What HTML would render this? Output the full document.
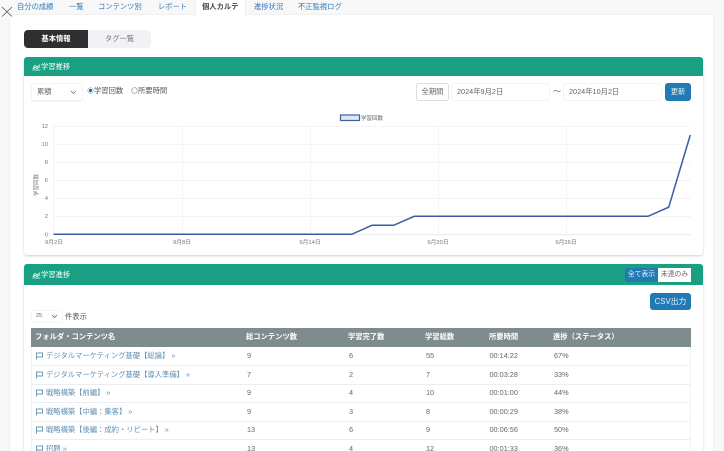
<!DOCTYPE html>
<html lang="ja"><head><meta charset="utf-8"><style>
*{box-sizing:border-box}
html,body{margin:0;padding:0;width:724px;height:451px;overflow:hidden}
body{background:#f8f8f8;font-family:"Liberation Sans","Noto Sans CJK JP",sans-serif;color:#555;font-size:7.3px}
#w{position:absolute;left:0;top:0;width:724px;height:451px;overflow:hidden;filter:blur(.25px)}
.a{position:absolute;white-space:nowrap}
.tab{position:absolute;top:0;height:15px;line-height:13px;color:#337ab7;font-size:7.3px;white-space:nowrap}
.panel{position:absolute;left:10px;top:15px;width:703px;height:436px;background:#fff;box-shadow:0 0 2px #e4e4e4}
.card{position:absolute;left:24px;width:679px;background:#fff;box-shadow:0 1px 2px #ccc;border-radius:3px}
.head{position:absolute;left:0;top:0;width:100%;background:#19a082;border-radius:3px 3px 0 0;color:#fff;font-size:7.3px}
.input{position:absolute;background:#fff;border:1px solid #f4f4f4;border-radius:3px;height:18px;line-height:16px;color:#666;font-size:7.3px;white-space:nowrap;padding-left:5px}
.btn{position:absolute;background:#217ab5;color:#e8f2f8;border-radius:3px;text-align:center;white-space:nowrap;font-size:7.3px}
.row{position:absolute;left:31px;width:660px;height:19px;border-bottom:1px solid #eee;border-left:1px solid #f2f2f2;border-right:1px solid #f2f2f2;font-size:7.3px;color:#666;line-height:18px}
.row span{position:absolute;top:0;white-space:nowrap}
.row .n{left:14px;color:#5f8fb2;font-size:7.3px}
.row svg{position:absolute;left:3px;top:5px}
.th{position:absolute;top:328px;line-height:18px;color:#fff;font-weight:bold;font-size:7.3px;white-space:nowrap}
svg text{font-family:"Liberation Sans","Noto Sans CJK JP",sans-serif}
</style></head><body><div id="w">
<div class="panel"></div>
<div class="a" style="left:195px;top:0;width:51px;height:16px;background:#fff;border:1px solid #eee;border-top:0;border-bottom:0"></div>
<div class="tab" style="left:17px">自分の成績</div>
<div class="tab" style="left:69px">一覧</div>
<div class="tab" style="left:98px">コンテンツ別</div>
<div class="tab" style="left:158px">レポート</div>
<div class="tab" style="left:202px;color:#444;font-weight:bold">個人カルテ</div>
<div class="tab" style="left:254px">進捗状況</div>
<div class="tab" style="left:298px">不正監視ログ</div>
<svg class="a" style="left:0;top:5px" width="14" height="13"><path d="M2 2L12 11.500M12 2L2 11.500" stroke="#555" stroke-width="0.800" fill="none"/></svg>

<div class="a" style="left:24px;top:30px;width:64px;height:18px;background:#2f2f2f;border-radius:4px 0 0 4px;color:#fff;font-weight:bold;text-align:center;line-height:18px">基本情報</div>
<div class="a" style="left:88px;top:30px;width:63px;height:18px;background:#f1f2f5;border-radius:0 4px 4px 0;color:#777;text-align:center;line-height:18px">タグ一覧</div>

<div class="card" style="top:57px;height:198px">
<div class="head" style="height:19px;line-height:19px;padding-left:17px">学習推移</div>
<svg class="a" style="left:8px;top:6px" width="9" height="8"><path d="M0.500 7H8.500M1 5L3 2.500L5 4L8 1.500M1 6L3 4.500L5 5.500L8 3.500" stroke="#fff" stroke-width="0.800" fill="none"/></svg>
</div>
<div class="input" style="left:31px;top:83px;width:52px;box-shadow:0 1px 1px #f0f0f0">累積</div>
<svg class="a" style="left:70px;top:90px" width="7" height="5"><path d="M1 1L3.500 3.500L6 1" stroke="#666" stroke-width="0.700" fill="none"/></svg>
<svg class="a" style="left:87px;top:87px" width="7" height="7"><circle cx="3.500" cy="3.500" r="2.800" fill="#fff" stroke="#9bb"  stroke-width="0.600"/><circle cx="3.500" cy="3.500" r="1.700" fill="#1f6fd0"/></svg>
<div class="a" style="left:94px;top:86px;color:#555">学習回数</div>
<svg class="a" style="left:131px;top:87px" width="7" height="7"><circle cx="3.500" cy="3.500" r="2.800" fill="#fff" stroke="#888" stroke-width="0.600"/></svg>
<div class="a" style="left:138px;top:86px;color:#555">所要時間</div>
<div class="input" style="left:416px;top:83px;width:33px;border-color:#ddd;padding:0;text-align:center;color:#666">全期間</div>
<div class="input" style="left:451px;top:83px;width:99px">2024年9月2日</div>
<div class="a" style="left:553px;top:86px;color:#666;font-size:8px">～</div>
<div class="input" style="left:563px;top:83px;width:99px">2024年10月2日</div>
<div class="btn" style="left:665px;top:83px;width:26px;height:18px;line-height:18px">更新</div>

<svg class="a" style="left:24px;top:105px" width="679" height="150">
<g stroke="#efefef" stroke-width="0.700">
<path d="M29 21.300H667M29 39.300H667M29 57.500H667M29 75.500H667M29 93.500H667M29 111.500H667"/>
<path d="M29.500 21V129M158.500 21V129M286.500 21V129M414.500 21V129M542.500 21V129"/>
</g>
<path d="M29 129.800H667" stroke="#ddd" stroke-width="0.700"/>
<rect x="316.500" y="10" width="19" height="5.500" fill="#dfe6f3" stroke="#3d5fa8" stroke-width="1.200"/>
<text x="337" y="15" font-size="5.500" fill="#666">学習回数</text>
<g font-size="5.800" fill="#777" text-anchor="end">
<text x="24" y="23">12</text><text x="24" y="41">10</text><text x="24" y="59">8</text><text x="24" y="77">6</text><text x="24" y="95">4</text><text x="24" y="113">2</text><text x="24" y="131.500">0</text>
</g>
<g font-size="5.800" fill="#777" text-anchor="middle">
<text x="30" y="139">9月2日</text><text x="158" y="139">9月8日</text><text x="286" y="139">9月14日</text><text x="414" y="139">9月20日</text><text x="542" y="139">9月26日</text>
</g>
<text transform="translate(14 80) rotate(-90)" font-size="5.500" fill="#777" text-anchor="middle">学習回数</text>
<polyline points="29.500,129.300 327.700,129.300 348,120.300 369.700,120.300 390.300,111.300 624,111.300 644.700,102.200 666.300,30" fill="none" stroke="#3a5ba6" stroke-width="1.500"/>
</svg>

<div class="card" style="top:264px;height:187px;border-radius:3px 3px 0 0">
<div class="head" style="height:21px;line-height:21px;padding-left:17px">学習進捗</div>
<svg class="a" style="left:8px;top:7px" width="9" height="8"><path d="M0.500 7H8.500M1 5L3 2.500L5 4L8 1.500M1 6L3 4.500L5 5.500L8 3.500" stroke="#fff" stroke-width="0.800" fill="none"/></svg>
</div>
<div class="btn" style="left:625px;top:268px;width:33px;height:13.500px;line-height:13px;border-radius:2px 0 0 2px;font-size:6.800px">全て表示</div>
<div class="a" style="left:658px;top:268px;width:33px;height:13.500px;line-height:13px;background:#fff;color:#666;text-align:center;font-size:6.800px">未達のみ</div>
<div class="btn" style="left:650px;top:292.500px;width:41px;height:17px;line-height:17px;font-size:7.800px">CSV出力</div>
<div class="input" style="left:31px;top:310px;width:32px;height:13px;line-height:11px;font-size:5.500px;padding-left:4px">25</div>
<svg class="a" style="left:51px;top:314px" width="7" height="5"><path d="M1 1L3.500 3.500L6 1" stroke="#666" stroke-width="0.800" fill="none"/></svg>
<div class="a" style="left:65px;top:312px;font-size:7.300px;color:#555">件表示</div>

<div class="a" style="left:31px;top:328px;width:660px;height:18.500px;background:#7f8c8d"></div>
<div class="th" style="left:35px">フォルダ・コンテンツ名</div>
<div class="th" style="left:246px">総コンテンツ数</div>
<div class="th" style="left:348px">学習完了数</div>
<div class="th" style="left:425px">学習総数</div>
<div class="th" style="left:489px">所要時間</div>
<div class="th" style="left:553px">進捗（ステータス）</div>

<div class="row" style="top:347px"><svg width="9" height="8"><path d="M1.500 7.500V1H7.500V5H1.500" fill="none" stroke="#6f9ab5" stroke-width="1"/></svg><span class="n">デジタルマーケティング基礎【総論】 »</span><span style="left:215px">9</span><span style="left:317px">6</span><span style="left:394px">55</span><span style="left:457.500px">00:14:22</span><span style="left:522px">67%</span></div>
<div class="row" style="top:366px"><svg width="9" height="8"><path d="M1.500 7.500V1H7.500V5H1.500" fill="none" stroke="#6f9ab5" stroke-width="1"/></svg><span class="n">デジタルマーケティング基礎【導入準備】 »</span><span style="left:215px">7</span><span style="left:317px">2</span><span style="left:394px">7</span><span style="left:457.500px">00:03:28</span><span style="left:522px">33%</span></div>
<div class="row" style="top:384px"><svg width="9" height="8"><path d="M1.500 7.500V1H7.500V5H1.500" fill="none" stroke="#6f9ab5" stroke-width="1"/></svg><span class="n">戦略構築【前編】 »</span><span style="left:215px">9</span><span style="left:317px">4</span><span style="left:394px">10</span><span style="left:457.500px">00:01:00</span><span style="left:522px">44%</span></div>
<div class="row" style="top:403px"><svg width="9" height="8"><path d="M1.500 7.500V1H7.500V5H1.500" fill="none" stroke="#6f9ab5" stroke-width="1"/></svg><span class="n">戦略構築【中編：集客】 »</span><span style="left:215px">9</span><span style="left:317px">3</span><span style="left:394px">8</span><span style="left:457.500px">00:00:29</span><span style="left:522px">38%</span></div>
<div class="row" style="top:421px"><svg width="9" height="8"><path d="M1.500 7.500V1H7.500V5H1.500" fill="none" stroke="#6f9ab5" stroke-width="1"/></svg><span class="n">戦略構築【後編：成約・リピート】 »</span><span style="left:215px">13</span><span style="left:317px">6</span><span style="left:394px">9</span><span style="left:457.500px">00:06:56</span><span style="left:522px">50%</span></div>
<div class="row" style="top:440px"><svg width="9" height="8"><path d="M1.500 7.500V1H7.500V5H1.500" fill="none" stroke="#6f9ab5" stroke-width="1"/></svg><span class="n">招聘 »</span><span style="left:215px">13</span><span style="left:317px">4</span><span style="left:394px">12</span><span style="left:457.500px">00:01:33</span><span style="left:522px">36%</span></div>
</div></body></html>
